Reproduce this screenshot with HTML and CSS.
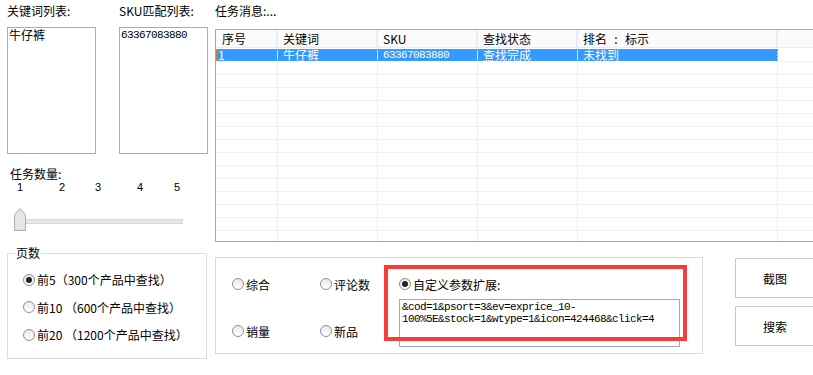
FILE: index.html
```
<!DOCTYPE html>
<html lang="zh-CN">
<head>
    <meta charset="UTF-8">
    <title>任务查询</title>
    <link rel="stylesheet" href="styles.css">
</head>
<body>
    <div class="app">
        <div class="side">
            <div class="lists">
                <div class="list-col">
                    <div class="cap">关键词列表:</div>
                    <div class="listbox">牛仔裤</div>
                </div>
                <div class="list-col">
                    <div class="cap">SKU匹配列表:</div>
                    <div class="listbox num">63367083880</div>
                </div>
            </div>

            <div class="count">
                <div class="cap">任务数量:</div>
                <div class="ticks"><span>1</span><span>2</span><span>3</span><span>4</span><span>5</span></div>
                <div class="slider">
                    <svg class="thumb" width="12" height="23" viewBox="0 0 12 23">
                        <polygon points="0.5,6.5 6,0.5 11.5,6.5 11.5,22.5 0.5,22.5" fill="#e6e6e6" stroke="#adadad"/>
                    </svg>
                    <div class="track"></div>
                </div>
            </div>

            <fieldset class="pages">
                <legend>页数</legend>
                <div class="opt"><span class="radio on"></span>前5（300个产品中查找）</div>
                <div class="opt"><span class="radio"></span>前10 （600个产品中查找）</div>
                <div class="opt"><span class="radio"></span>前20 （1200个产品中查找）</div>
            </fieldset>
        </div>

        <div class="main">
            <div class="cap">任务消息:...</div>
            <div class="grid">
                <div class="head">
                    <div class="c c1">序号</div>
                    <div class="c c2">关键词</div>
                    <div class="c c3">SKU</div>
                    <div class="c c4">查找状态</div>
                    <div class="c c5">排名<span class="colon">:</span>标示</div>
                    <div class="c c6"></div>
                </div>
                <div class="body" id="rows">
                    <div class="row sel">
                        <div class="cells">
                            <div class="c c1">1</div>
                            <div class="c c2">牛仔裤</div>
                            <div class="c c3 num">63367083880</div>
                            <div class="c c4">查找完成</div>
                            <div class="c c5">未找到</div>
                        </div>
                        <div class="c c6"></div>
                    </div>
                </div>
            </div>

            <div class="bottom">
                <div class="sort-box">
                    <div class="sorts">
                        <div class="opt"><span class="radio"></span>综合</div>
                        <div class="opt"><span class="radio"></span>评论数</div>
                        <div class="opt"><span class="radio"></span>销量</div>
                        <div class="opt"><span class="radio"></span>新品</div>
                    </div>
                    <div class="custom">
                        <div class="opt"><span class="radio on"></span>自定义参数扩展:</div>
                        <div class="params num">&amp;cod=1&amp;psort=3&amp;ev=exprice_10-
100%5E&amp;stock=1&amp;wtype=1&amp;icon=424468&amp;click=4</div>
                    </div>
                    <div class="mark"></div>
                </div>
                <div class="buttons">
                    <button class="btn">截图</button>
                    <button class="btn">搜索</button>
                </div>
            </div>
        </div>
    </div>

    <script>
        // fill the rest of the grid with empty rows
        var rows = document.getElementById('rows');
        for (var i = 0; i < 14; i++) {
            var row = document.createElement('div');
            row.className = 'row';
            row.innerHTML = '<div class="cells"><div class="c c1"></div><div class="c c2"></div>' +
                '<div class="c c3"></div><div class="c c4"></div><div class="c c5"></div></div>' +
                '<div class="c c6"></div>';
            rows.appendChild(row);
        }
    </script>
</body>
</html>
```

FILE: styles.css
```
body {
    margin: 0;
    padding: 0;
    background-color: #fff;
    font-family: "Noto Sans CJK SC", "Liberation Sans", sans-serif;
    font-size: 12px;
    color: #000;
    overflow: hidden;
}
.app {
    display: flex;
    padding-left: 7px;
    width: 820px;
}
.cap {
    margin-top: 4px;
    height: 14px;
    line-height: 14px;
    white-space: nowrap;
}
.num {
    font-family: "Liberation Mono", monospace;
    font-size: 11px;
    letter-spacing: -0.6px;
}

/* left side */
.side {
    width: 200px;
    flex-shrink: 0;
}
.lists {
    display: flex;
    gap: 23px;
}
.listbox {
    margin-top: 9px;
    width: 89px;
    height: 127px;
    box-sizing: border-box;
    border: 1px solid #acacac;
    padding: 0 1px;
    line-height: 14px;
}
.count .cap {
    margin-top: 13px;
    padding-left: 3px;
}
.ticks {
    display: grid;
    grid-template-columns: 42px 36px 42px 37px auto;
    padding-left: 10px;
    height: 12px;
    line-height: 12px;
    font-family: "Liberation Sans", sans-serif;
    font-size: 11px;
}
.slider {
    display: flex;
    align-items: center;
    margin-top: 15px;
    padding-left: 7px;
    height: 23px;
}
.thumb {
    display: block;
}
.track {
    width: 157px;
    height: 5px;
    box-sizing: border-box;
    background-color: #e7e7e7;
    border: 1px solid #d8d8d8;
    margin-top: 4px;
}
.pages {
    margin: 15px 0 0;
    padding: 6px 0 8px 7px;
    width: 200px;
    height: 113px;
    box-sizing: border-box;
    border: 1px solid #dcdcdc;
}
.pages legend {
    margin-left: 0;
    padding: 0 1px;
    line-height: 14px;
}
.pages .opt {
    padding-left: 8px;
    height: 27.5px;
}
.opt {
    display: flex;
    align-items: center;
    height: 28px;
    white-space: nowrap;
}
.radio {
    width: 12px;
    height: 12px;
    box-sizing: border-box;
    border: 1px solid #8f8f8f;
    border-radius: 50%;
    background: linear-gradient(#e9e9e9, #fff);
    margin-right: 2px;
    display: flex;
    align-items: center;
    justify-content: center;
}
.radio.on::after {
    content: "";
    width: 6px;
    height: 6px;
    border-radius: 50%;
    background-color: #222;
}

/* right side */
.main {
    margin-left: 8px;
    width: 600px;
    flex-shrink: 0;
}
.grid {
    margin-top: 11px;
    height: 213px;
    box-sizing: border-box;
    border: 1px solid #a9a9a9;
    border-right: none;
    overflow: hidden;
}
.head {
    display: flex;
    height: 17px;
    background-color: #fbfbfb;
    border-bottom: 1px solid #e4ecf8;
    margin-bottom: 1px;
}
.head .c {
    line-height: 17px;
    border-right: 2px solid #e6eefa;
}
.colon {
    display: inline-block;
    width: 18px;
    text-align: center;
}
.c {
    box-sizing: border-box;
    padding-left: 5px;
    white-space: nowrap;
}
.c1 { width: 62px; }
.c2 { width: 100px; }
.c3 { width: 100px; }
.c4 { width: 100px; }
.c5 { width: 200px; }
.c6 { flex: 1; }
.head .c1 { padding-left: 6px; }
.row {
    display: flex;
    height: 13px;
}
.cells {
    display: flex;
}
.row .c {
    height: 13px;
    line-height: 12px;
    border-right: 1px solid #f0f0f0;
    border-bottom: 1px solid #f0f0f0;
}
.row .c1 { padding-left: 2px; }
.row.sel .cells {
    outline: 1px dotted #e0813a;
    outline-offset: -1px;
    height: 12px;
}
.row.sel .cells .c {
    height: 12px;
    background-color: #3399ff;
    color: #fff;
    border-bottom: none;
    border-right-color: #cfe3fb;
}
.bottom {
    display: flex;
    margin-top: 15px;
}
.sort-box {
    position: relative;
    display: flex;
    width: 488px;
    height: 97px;
    box-sizing: border-box;
    border: 1px solid #d9d9d9;
    padding: 12px 0 0 16px;
}
.sorts {
    display: grid;
    grid-template-columns: 88px 79px;
    grid-template-rows: 28px 28px;
    row-gap: 19px;
}
.custom {
    display: flex;
    flex-direction: column;
}
.params {
    margin-top: 1px;
    width: 281px;
    height: 48px;
    box-sizing: border-box;
    border: 1px solid #a8a8b0;
    padding: 1px 2px;
    line-height: 12px;
    white-space: pre;
}
.mark {
    position: absolute;
    left: 168px;
    top: 7px;
    width: 303px;
    height: 76px;
    box-sizing: border-box;
    border: 4px solid #f83b3b;
}
.buttons {
    display: flex;
    flex-direction: column;
    gap: 8px;
    margin-left: 32px;
    margin-top: 1px;
}
.btn {
    width: 80px;
    height: 40px;
    background-color: #fff;
    border: 1px solid #c6c6c6;
    font-family: inherit;
    font-size: 12px;
    color: #000;
    padding: 0;
}
```
